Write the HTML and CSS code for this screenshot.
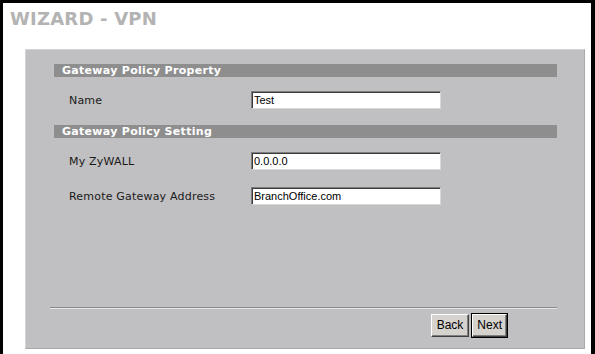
FILE: index.html
```html
<!DOCTYPE html>
<html>
<head>
<meta charset="utf-8">
<link rel="stylesheet" href="styles.css">
</head>
<body>
<div class="frame">
  <h1 class="title">WIZARD - VPN</h1>
  <div class="panel">
    <div class="bar">Gateway Policy Property</div>
    <div class="row row-name">
      <span class="label">Name</span>
      <span class="field">Test</span>
    </div>
    <div class="bar bar-2">Gateway Policy Setting</div>
    <div class="row row-zywall">
      <span class="label">My ZyWALL</span>
      <span class="field">0.0.0.0</span>
    </div>
    <div class="row row-remote">
      <span class="label">Remote Gateway Address</span>
      <span class="field">BranchOffice.com</span>
    </div>
    <div class="footer">
      <div class="sep"></div>
      <div class="buttons">
        <span class="btn">Back</span>
        <span class="btn btn-default">Next</span>
      </div>
    </div>
  </div>
</div>
</body>
</html>
```
FILE: styles.css
```css
html, body {
  margin: 0;
  padding: 0;
  background: #ffffff;
}
.frame {
  width: 595px;
  height: 354px;
  box-sizing: border-box;
  border-top: 3px solid #000;
  border-left: 3px solid #000;
  border-right: 4px solid #000;
  background: #fff;
  overflow: hidden;
}
.title {
  margin: 0;
  padding: 5px 0 0 7px;
  height: 46px;
  box-sizing: border-box;
  font-family: "DejaVu Sans", Verdana, sans-serif;
  font-weight: bold;
  font-size: 18px;
  line-height: 22px;
  color: #b3b3b3;
  letter-spacing: 0.2px;
}
.panel {
  margin-left: 22px;
  width: 560px;
  height: 300px;
  box-sizing: border-box;
  background: #c0bfc1;
  border-top: 1px solid #d4d4d6;
  border-left: 1px solid #d4d4d6;
  border-right: 1px solid #a9a9ab;
  border-bottom: 1px solid #a9a9ab;
  padding: 14px 27px 0 28px;
  display: flex;
  flex-direction: column;
}
.bar {
  height: 13px;
  background: #8e8e8f;
  color: #fff;
  font-family: "DejaVu Sans", Verdana, sans-serif;
  font-weight: bold;
  font-size: 11px;
  letter-spacing: 0.3px;
  line-height: 13px;
  padding-left: 8px;
  white-space: nowrap;
}
.bar-2 {
  margin-top: 16px;
}
.row {
  display: flex;
  align-items: center;
  height: 18px;
}
.row-name { margin-top: 14px; }
.row-zywall { margin-top: 14px; }
.row-remote { margin-top: 17px; }
.label {
  width: 197px;
  box-sizing: border-box;
  padding-left: 15px;
  font-family: "DejaVu Sans", Verdana, sans-serif;
  font-size: 11px;
  letter-spacing: 0.2px;
  color: #1a1a1a;
}
.field {
  width: 190px;
  height: 18px;
  box-sizing: border-box;
  background: #fff;
  border-top: 1px solid #7e7e7e;
  border-left: 1px solid #7e7e7e;
  border-right: 1px solid #d8d8d8;
  border-bottom: 1px solid #d8d8d8;
  box-shadow: inset 1px 1px 0 #3a3a3a;
  padding-left: 2px;
  font-family: "Liberation Sans", Arial, sans-serif;
  font-size: 11px;
  line-height: 16px;
  color: #000;
}
.footer {
  margin-top: auto;
  padding-bottom: 11px;
}
.sep {
  margin-left: -4px;
  height: 1px;
  border-top: 1px solid #8a8a8a;
  background: #e6e6e6;
}
.buttons {
  margin-top: 5px;
  display: flex;
  justify-content: flex-end;
  gap: 3px;
  padding-right: 50px;
}
.btn {
  height: 23px;
  box-sizing: border-box;
  padding: 0 5px;
  background: #d6d3ce;
  border-top: 1px solid #fff;
  border-left: 1px solid #fff;
  border-right: 1px solid #404040;
  border-bottom: 1px solid #404040;
  box-shadow: inset -1px -1px 0 #808080;
  font-family: "Liberation Sans", Arial, sans-serif;
  font-size: 12px;
  line-height: 21px;
  color: #000;
}
.btn-default {
  outline: 1px solid #000;
  padding: 0 4px;
}
```
